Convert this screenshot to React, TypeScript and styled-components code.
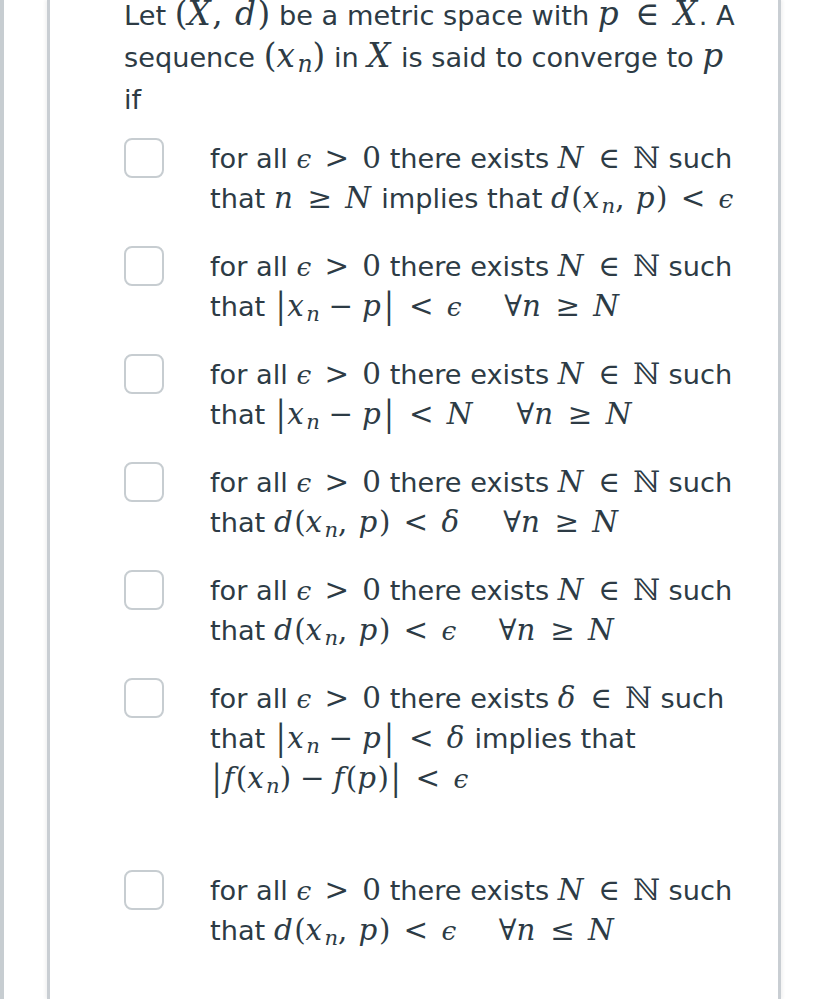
import React from "react";
import styled, { createGlobalStyle } from "styled-components";

const Global = createGlobalStyle`
  html, body { margin: 0; padding: 0; background: #ffffff; }
  body { font-family: "DejaVu Sans", Lato, sans-serif; color: #2d3b45; overflow: hidden; }
`;

const Page = styled.div`
  display: flex;
  min-height: 100vh;
  border-left: 4px solid #c7cdd1;
  padding-left: 43px;
  box-sizing: border-box;
`;

const Card = styled.div`
  width: 734px;
  box-sizing: border-box;
  border-left: 3px solid #c9ced3;
  border-right: 3px solid #c9ced3;
  box-shadow: -2px 0 3px rgba(0, 0, 0, 0.05), 2px 0 3px rgba(0, 0, 0, 0.05);
  padding: 0 36px 0 74px;
  font-size: 27.2px;
  line-height: 42px;
`;

const Question = styled.p`
  margin: -5px 0 18px 0;
`;

const Options = styled.div`
  display: flex;
  flex-direction: column;
`;

const Option = styled.label<{ $extra?: number }>`
  display: flex;
  align-items: flex-start;
  gap: 46px;
  padding-bottom: ${(p) => 28 + (p.$extra ?? 0)}px;
  line-height: 40px;
`;

const Box = styled.span`
  flex: 0 0 auto;
  width: 40px;
  height: 40px;
  box-sizing: border-box;
  margin-top: -1px;
  border: 2px solid #c7cdd1;
  border-radius: 8px;
  background: #fff;
`;

const Answer = styled.span`
  flex: 1 1 auto;
`;

const Mx = styled.span<{ $scale?: number }>`
  font-family: "DejaVu Serif", "Liberation Serif", serif;
  font-size: ${(p) => p.$scale ?? 1.08}em;
  line-height: 1;
  white-space: nowrap;
`;

const Var = styled.i`
  font-style: italic;
  margin-right: 0.05em;
`;

const Rel = styled.span`
  margin: 0 0.45em;
`;

const Bin = styled.span`
  margin: 0 0.3em;
`;

const Punct = styled.span`
  margin-right: 0.38em;
`;

const Quad = styled.span`
  display: inline-block;
  width: 1.45em;
`;

const Sub = styled.i`
  font-size: 0.72em;
  vertical-align: -0.22em;
  line-height: 0;
  font-style: italic;
  margin-left: 0.04em;
`;

const Bb = styled.span`
  font-family: "DejaVu Serif", serif;
`;

const Eps = styled.i`
  font-family: "DejaVu Serif", serif;
  font-size: 0.9em;
`;

const Bar = styled.span`
  display: inline-block;
  transform: scaleY(1.2);
  margin: 0 0.06em;
`;

const Xn = () => (
  <>
    <Var>x</Var>
    <Sub>n</Sub>
  </>
);

const lead = (v: React.ReactNode) => (
  <>
    for all{" "}
    <Mx>
      <Eps>ϵ</Eps>
      <Rel>&gt;</Rel>0
    </Mx>{" "}
    there exists{" "}
    <Mx>
      {v}
      <Rel>∈</Rel>
      <Bb>ℕ</Bb>
    </Mx>{" "}
    such that{" "}
  </>
);

const forAll = (rel: string) => (
  <>
    <Quad />∀<Var>n</Var>
    <Rel>{rel}</Rel>
    <Var>N</Var>
  </>
);

const dxp = (
  <>
    <Var>d</Var>(<Xn />
    <Punct>,</Punct>
    <Var>p</Var>)
  </>
);

const absXp = (
  <>
    <Bar>|</Bar>
    <Xn />
    <Bin>−</Bin>
    <Var>p</Var>
    <Bar>|</Bar>
  </>
);

const N = <Var>N</Var>;
const delta = <Var>δ</Var>;

const options: { node: React.ReactNode; extra?: number }[] = [
  {
    node: (
      <>
        {lead(N)}
        <Mx>
          <Var>n</Var>
          <Rel>≥</Rel>
          <Var>N</Var>
        </Mx>{" "}
        implies that{" "}
        <Mx>
          {dxp}
          <Rel>&lt;</Rel>
          <Eps>ϵ</Eps>
        </Mx>
      </>
    ),
  },
  {
    node: (
      <>
        {lead(N)}
        <Mx>
          {absXp}
          <Rel>&lt;</Rel>
          <Eps>ϵ</Eps>
          {forAll("≥")}
        </Mx>
      </>
    ),
  },
  {
    node: (
      <>
        {lead(N)}
        <Mx>
          {absXp}
          <Rel>&lt;</Rel>
          <Var>N</Var>
          {forAll("≥")}
        </Mx>
      </>
    ),
  },
  {
    node: (
      <>
        {lead(N)}
        <Mx>
          {dxp}
          <Rel>&lt;</Rel>
          <Var>δ</Var>
          {forAll("≥")}
        </Mx>
      </>
    ),
  },
  {
    node: (
      <>
        {lead(N)}
        <Mx>
          {dxp}
          <Rel>&lt;</Rel>
          <Eps>ϵ</Eps>
          {forAll("≥")}
        </Mx>
      </>
    ),
  },
  {
    node: (
      <>
        {lead(delta)}
        <Mx>
          {absXp}
          <Rel>&lt;</Rel>
          <Var>δ</Var>
        </Mx>{" "}
        implies that{" "}
        <Mx>
          <Bar>|</Bar>
          <Var>f</Var>(<Xn />)<Bin>−</Bin>
          <Var>f</Var>(<Var>p</Var>)<Bar>|</Bar>
          <Rel>&lt;</Rel>
          <Eps>ϵ</Eps>
        </Mx>
      </>
    ),
    extra: 44,
  },
  {
    node: (
      <>
        {lead(N)}
        <Mx>
          {dxp}
          <Rel>&lt;</Rel>
          <Eps>ϵ</Eps>
          {forAll("≤")}
        </Mx>
      </>
    ),
  },
];

export default function App() {
  return (
    <>
      <Global />
      <Page>
        <Card>
          <Question>
            Let{" "}
            <Mx $scale={1.2}>
              (<Var>X</Var>
              <Punct>,</Punct>
              <Var>d</Var>)
            </Mx>{" "}
            be a metric space with{" "}
            <Mx $scale={1.2}>
              <Var>p</Var>
              <Rel>∈</Rel>
              <Var>X</Var>
            </Mx>
            . A sequence{" "}
            <Mx $scale={1.2}>
              (<Xn />)
            </Mx>{" "}
            in{" "}
            <Mx $scale={1.2}>
              <Var>X</Var>
            </Mx>{" "}
            is said to converge to{" "}
            <Mx $scale={1.2}>
              <Var>p</Var>
            </Mx>{" "}
            if
          </Question>
          <Options>
            {options.map((o, i) => (
              <Option key={i} $extra={o.extra}>
                <Box />
                <Answer>{o.node}</Answer>
              </Option>
            ))}
          </Options>
        </Card>
      </Page>
    </>
  );
}
